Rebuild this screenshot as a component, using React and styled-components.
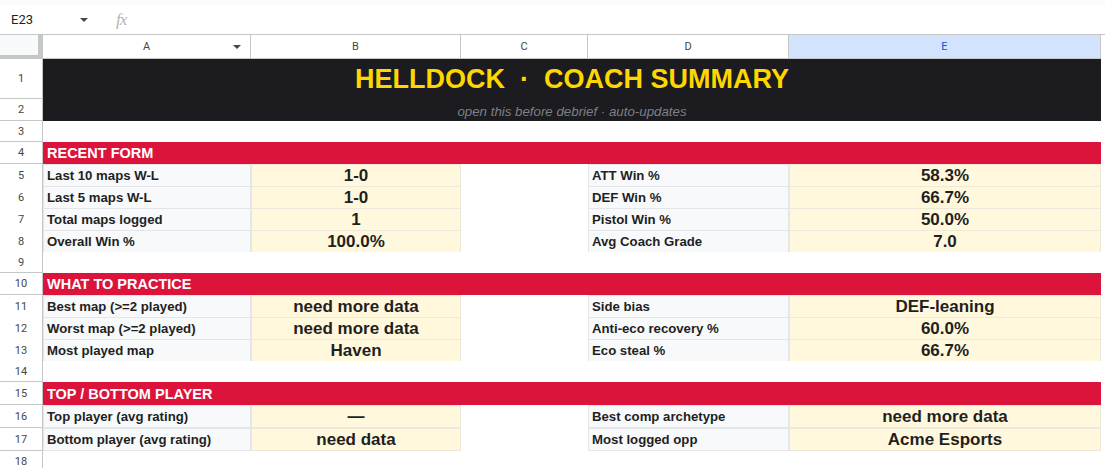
import React from 'react';
import styled, { createGlobalStyle } from 'styled-components';

const GlobalStyle = createGlobalStyle`
  html, body {
    margin: 0;
    padding: 0;
    background: #ffffff;
  }
  body {
    font-family: Roboto, "Liberation Sans", Arial, sans-serif;
    overflow: hidden;
  }
`;

const COLS = '43px 208px 210px 127px 201px 312px 4px';

const Page = styled.div`
  width: 1105px;
  height: 468px;
  overflow: hidden;
`;

const TopStrip = styled.div`
  height: 5px;
  background: #f9fbfd;
`;

const FormulaBar = styled.div`
  height: 29px;
  display: flex;
  align-items: center;
  border-bottom: 1px solid #c4c7c5;
  background: #ffffff;
`;

const NameBox = styled.div`
  width: 96px;
  display: flex;
  align-items: center;
  justify-content: space-between;
  padding: 0 8px 0 11px;
  box-sizing: border-box;
  font-size: 13px;
  color: #1f1f1f;
`;

const Caret = styled.span`
  width: 0;
  height: 0;
  border-left: 4px solid transparent;
  border-right: 4px solid transparent;
  border-top: 4px solid ${(p) => p.$color || '#444746'};
`;

const Fx = styled.span`
  margin-left: 20px;
  font-family: "Liberation Serif", serif;
  font-style: italic;
  font-size: 17px;
  color: #b4b6b8;
  letter-spacing: -1px;
`;

const Row = styled.div`
  display: grid;
  grid-template-columns: ${COLS};
  height: ${(p) => p.$h || 22}px;
`;

const Corner = styled.div`
  background: #f8f9fa;
  border-right: 5px solid #c4c7c5;
  border-bottom: 4px solid #c4c7c5;
  box-sizing: border-box;
`;

const ColHead = styled.div`
  display: flex;
  align-items: center;
  justify-content: center;
  position: relative;
  font-size: 11px;
  color: ${(p) => (p.$active ? '#0b57d0' : '#444746')};
  background: ${(p) => (p.$active ? '#d3e3fd' : '#ffffff')};
  border-right: 1px solid #c4c7c5;
  border-bottom: 1px solid #c4c7c5;
  box-sizing: border-box;
`;

const HeadCaret = styled.span`
  position: absolute;
  right: 9px;
  top: 10px;
  display: flex;
`;

const RowNum = styled.div`
  display: flex;
  align-items: center;
  justify-content: center;
  font-size: 11px;
  color: #444746;
  background: #ffffff;
  border-right: 1px solid #c4c7c5;
  border-bottom: 1px solid #c4c7c5;
  box-sizing: border-box;
`;

const Blank = styled.div`
  background: #ffffff;
`;

const TitleCell = styled.div`
  grid-column: 2 / 7;
  background: #1c1b1f;
  display: flex;
  align-items: center;
  justify-content: center;
  font-family: "Liberation Sans", Arial, sans-serif;
  white-space: pre;
  color: ${(p) => (p.$sub ? '#7d8087' : '#ffd700')};
  font-size: ${(p) => (p.$sub ? '13.3px' : '27px')};
  font-weight: ${(p) => (p.$sub ? 400 : 700)};
  font-style: ${(p) => (p.$sub ? 'italic' : 'normal')};
  padding-top: ${(p) => (p.$sub ? '2px' : '0')};
`;

const Section = styled.div`
  grid-column: 2 / 7;
  background: #dc143c;
  color: #ffffff;
  font-family: "Liberation Sans", Arial, sans-serif;
  font-weight: 700;
  font-size: 14.5px;
  display: flex;
  align-items: center;
  padding-left: 4px;
`;

const Label = styled.div`
  background: #f8f9fa;
  border: 1px solid #e3e5e8;
  box-sizing: border-box;
  display: flex;
  align-items: center;
  padding-left: 3px;
  font-family: "Liberation Sans", Arial, sans-serif;
  font-weight: 700;
  font-size: 13.2px;
  color: #1f1f1f;
  white-space: nowrap;
`;

const Value = styled.div`
  background: #fff8dc;
  border: 1px solid #ece8da;
  box-sizing: border-box;
  display: flex;
  align-items: center;
  justify-content: center;
  padding-top: 1px;
  font-family: "Liberation Sans", Arial, sans-serif;
  font-weight: 700;
  font-size: 17px;
  color: #1f1f1f;
  white-space: nowrap;
`;

const rows = [
  { type: 'title' },
  { type: 'sub' },
  { type: 'blank' },
  { type: 'section', text: 'RECENT FORM' },
  { type: 'data', a: 'Last 10 maps W-L', b: '1-0', d: 'ATT Win %', e: '58.3%' },
  { type: 'data', a: 'Last 5 maps W-L', b: '1-0', d: 'DEF Win %', e: '66.7%' },
  { type: 'data', a: 'Total maps logged', b: '1', d: 'Pistol Win %', e: '50.0%' },
  { type: 'data', a: 'Overall Win %', b: '100.0%', d: 'Avg Coach Grade', e: '7.0' },
  { type: 'blank' },
  { type: 'section', text: 'WHAT TO PRACTICE' },
  { type: 'data', a: 'Best map (>=2 played)', b: 'need more data', d: 'Side bias', e: 'DEF-leaning' },
  { type: 'data', a: 'Worst map (>=2 played)', b: 'need more data', d: 'Anti-eco recovery %', e: '60.0%' },
  { type: 'data', a: 'Most played map', b: 'Haven', d: 'Eco steal %', e: '66.7%' },
  { type: 'blank' },
  { type: 'section', text: 'TOP / BOTTOM PLAYER', h: 23 },
  { type: 'data', a: 'Top player (avg rating)', b: '—', d: 'Best comp archetype', e: 'need more data', h: 23 },
  { type: 'data', a: 'Bottom player (avg rating)', b: 'need data', d: 'Most logged opp', e: 'Acme Esports', h: 23 },
  { type: 'blank' },
];

const rowHeight = (r) => {
  if (r.h) return r.h;
  if (r.type === 'title') return 40;
  if (r.type === 'blank') return 21;
  return 22;
};

const renderCells = (r) => {
  if (r.type === 'title') return <TitleCell>HELLDOCK  ·  COACH SUMMARY</TitleCell>;
  if (r.type === 'sub') return <TitleCell $sub>open this before debrief · auto-updates</TitleCell>;
  if (r.type === 'section') return <Section>{r.text}</Section>;
  if (r.type === 'data')
    return (
      <>
        <Label>{r.a}</Label>
        <Value>{r.b}</Value>
        <Blank />
        <Label>{r.d}</Label>
        <Value>{r.e}</Value>
      </>
    );
  return (
    <>
      <Blank />
      <Blank />
      <Blank />
      <Blank />
      <Blank />
    </>
  );
};

const App = () => (
  <Page>
    <GlobalStyle />
    <TopStrip />
    <FormulaBar>
      <NameBox>
        E23
        <Caret />
      </NameBox>
      <Fx>fx</Fx>
    </FormulaBar>
    <Row $h={24}>
      <Corner />
      <ColHead>
        A
        <HeadCaret>
          <Caret />
        </HeadCaret>
      </ColHead>
      <ColHead>B</ColHead>
      <ColHead>C</ColHead>
      <ColHead>D</ColHead>
      <ColHead $active>E</ColHead>
      <Blank />
    </Row>
    {rows.map((r, i) => (
      <Row key={i} $h={rowHeight(r)}>
        <RowNum>{i + 1}</RowNum>
        {renderCells(r)}
        <Blank />
      </Row>
    ))}
  </Page>
);

export default App;
